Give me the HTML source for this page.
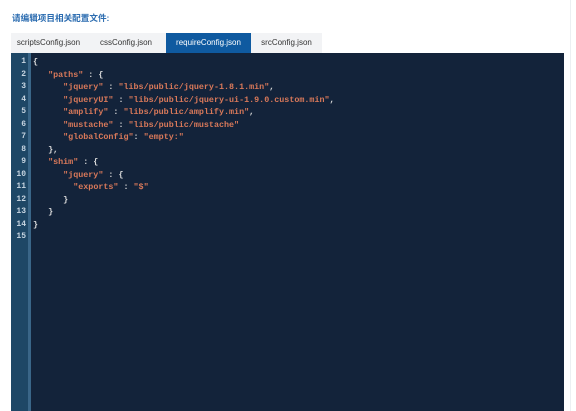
<!DOCTYPE html><html><head><style>
body{margin:0;width:576px;height:411px;background:#fff;position:relative;overflow:hidden;font-family:"Liberation Sans","Noto Sans CJK SC",sans-serif}
.t{position:absolute;left:12px;top:12px;font-size:8.6px;font-weight:bold;color:#2b6cb0}
.tabs{position:absolute;left:11px;top:33px;width:311px;height:20px;background:#f2f3f5;display:flex}
.tab{font-size:8px;color:#333;height:20px;line-height:20px;text-align:center;white-space:nowrap}
.tab.a{background:#0f5aa0;color:#fff}
.ed{position:absolute;left:11px;top:53px;width:553px;height:358px;background:#13233a}
.g{position:absolute;left:0;top:0;width:17px;height:100%;background:#1e4766}
.s{position:absolute;left:17px;top:0;width:3px;height:100%;background:#3a6688}
.n{position:absolute;left:0;top:3px;width:15px;text-align:right;font:bold 8px/12.5px "Liberation Mono",monospace;color:#c8d6e2}
pre{position:absolute;left:22px;top:3px;margin:0;font:bold 8.4px/12.5px "Liberation Mono",monospace;color:#dcdcdc}
b{color:#d9795a}
.v{position:absolute;left:570px;top:0;width:1px;height:411px;background:#eceff2}
</style></head><body>
<div class="t">请编辑项目相关配置文件:</div>
<div class="tabs"><div class="tab" style="width:75px">scriptsConfig.json</div><div class="tab" style="width:80px">cssConfig.json</div><div class="tab a" style="width:85px">requireConfig.json</div><div class="tab" style="width:71px">srcConfig.json</div></div>
<div class="ed"><div class="g"></div><div class="s"></div>
<div class="n">1<br>2<br>3<br>4<br>5<br>6<br>7<br>8<br>9<br>10<br>11<br>12<br>13<br>14<br>15</div>
<pre>{
   <b>"paths"</b> : {
      <b>"jquery"</b> : <b>"libs/public/jquery-1.8.1.min"</b>,
      <b>"jqueryUI"</b> : <b>"libs/public/jquery-ui-1.9.0.custom.min"</b>,
      <b>"amplify"</b> : <b>"libs/public/amplify.min"</b>,
      <b>"mustache"</b> : <b>"libs/public/mustache"</b>
      <b>"globalConfig"</b>: <b>"empty:"</b>
   },
   <b>"shim"</b> : {
      <b>"jquery"</b> : {
        <b>"exports"</b> : <b>"$"</b>
      }
   }
}
</pre></div>
<div class="v"></div>
</body></html>
